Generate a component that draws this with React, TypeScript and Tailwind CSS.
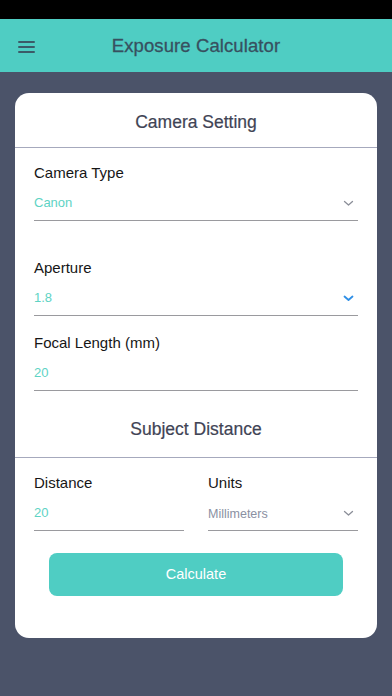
import React from 'react';

const font = { fontFamily: '"Liberation Sans", Arial, sans-serif' };

const Chevron: React.FC<{ active?: boolean }> = ({ active }) => (
  <svg width="11" height="7" viewBox="0 0 11 7" fill="none">
    <polyline
      points="1.5,1.5 5.5,5 9.5,1.5"
      stroke={active ? '#2f8fe6' : '#8c8f99'}
      strokeWidth={active ? 1.8 : 1.3}
      strokeLinecap="round"
      strokeLinejoin="round"
    />
  </svg>
);

type FieldProps = {
  label: string;
  value: string;
  select?: boolean;
  active?: boolean;
  muted?: boolean;
};

const Field: React.FC<FieldProps> = ({ label, value, select, active, muted }) => (
  <div>
    <div className="h-[20px] leading-[20px] text-[15px] text-[#161616]">{label}</div>
    <div className="h-[38px] flex items-start justify-between border-b border-[#9a9a9e]">
      <span
        className={
          muted
            ? 'pt-[12px] leading-[19px] text-[12.5px] text-[#8a90a2]'
            : 'pt-[10px] leading-[19px] text-[13px] text-[#5ed3c4]'
        }
      >
        {value}
      </span>
      {select && (
        <span className="pt-[17px] pr-[4px] flex">
          <Chevron active={active} />
        </span>
      )}
    </div>
  </div>
);

const App: React.FC = () => {
  return (
    <div className="min-h-[696px] flex flex-col bg-[#4b5369]" style={font}>
      <div className="h-[19px] bg-black" />
      <div className="h-[53px] relative flex items-center justify-center bg-[#4fcdc3]">
        <button className="absolute left-[18px] top-[22px] flex flex-col gap-[3px]">
          <span className="block w-[17px] h-[2px] bg-[#3b5b68] rounded" />
          <span className="block w-[17px] h-[2px] bg-[#3b5b68] rounded" />
          <span className="block w-[17px] h-[2px] bg-[#3b5b68] rounded" />
        </button>
        <h1 className="text-[18.5px] text-[#37505f] tracking-[0.1px] [-webkit-text-stroke:0.3px_#37505f]">
          Exposure Calculator
        </h1>
      </div>

      <div className="px-[15px] pt-[21px]">
        <div className="bg-white rounded-[14px] overflow-hidden">
          <div className="pt-[19px] pb-[15px] leading-[20px] text-center text-[17.5px] text-[#3f4455] [-webkit-text-stroke:0.2px_#3f4455] border-b border-[#a6a9bd]">
            Camera Setting
          </div>

          <div className="px-[19px] pt-[15px]">
            <Field label="Camera Type" value="Canon" select />
            <div className="h-[37px]" />
            <Field label="Aperture" value="1.8" select active />
            <div className="h-[17px]" />
            <Field label="Focal Length (mm)" value="20" />
          </div>

          <div className="pt-[28px] pb-[18px] leading-[20px] text-center text-[17.5px] text-[#3f4455] [-webkit-text-stroke:0.2px_#3f4455] border-b border-[#a6a9bd]">
            Subject Distance
          </div>

          <div className="px-[19px] pt-[15px] grid grid-cols-2 gap-[24px]">
            <Field label="Distance" value="20" />
            <Field label="Units" value="Millimeters" select muted />
          </div>

          <div className="px-[34px] pt-[22px] pb-[42px]">
            <button className="w-full h-[43px] rounded-[8px] bg-[#4fcdc3] text-white text-[14.5px]">
              Calculate
            </button>
          </div>
        </div>
      </div>
    </div>
  );
};

export default App;
